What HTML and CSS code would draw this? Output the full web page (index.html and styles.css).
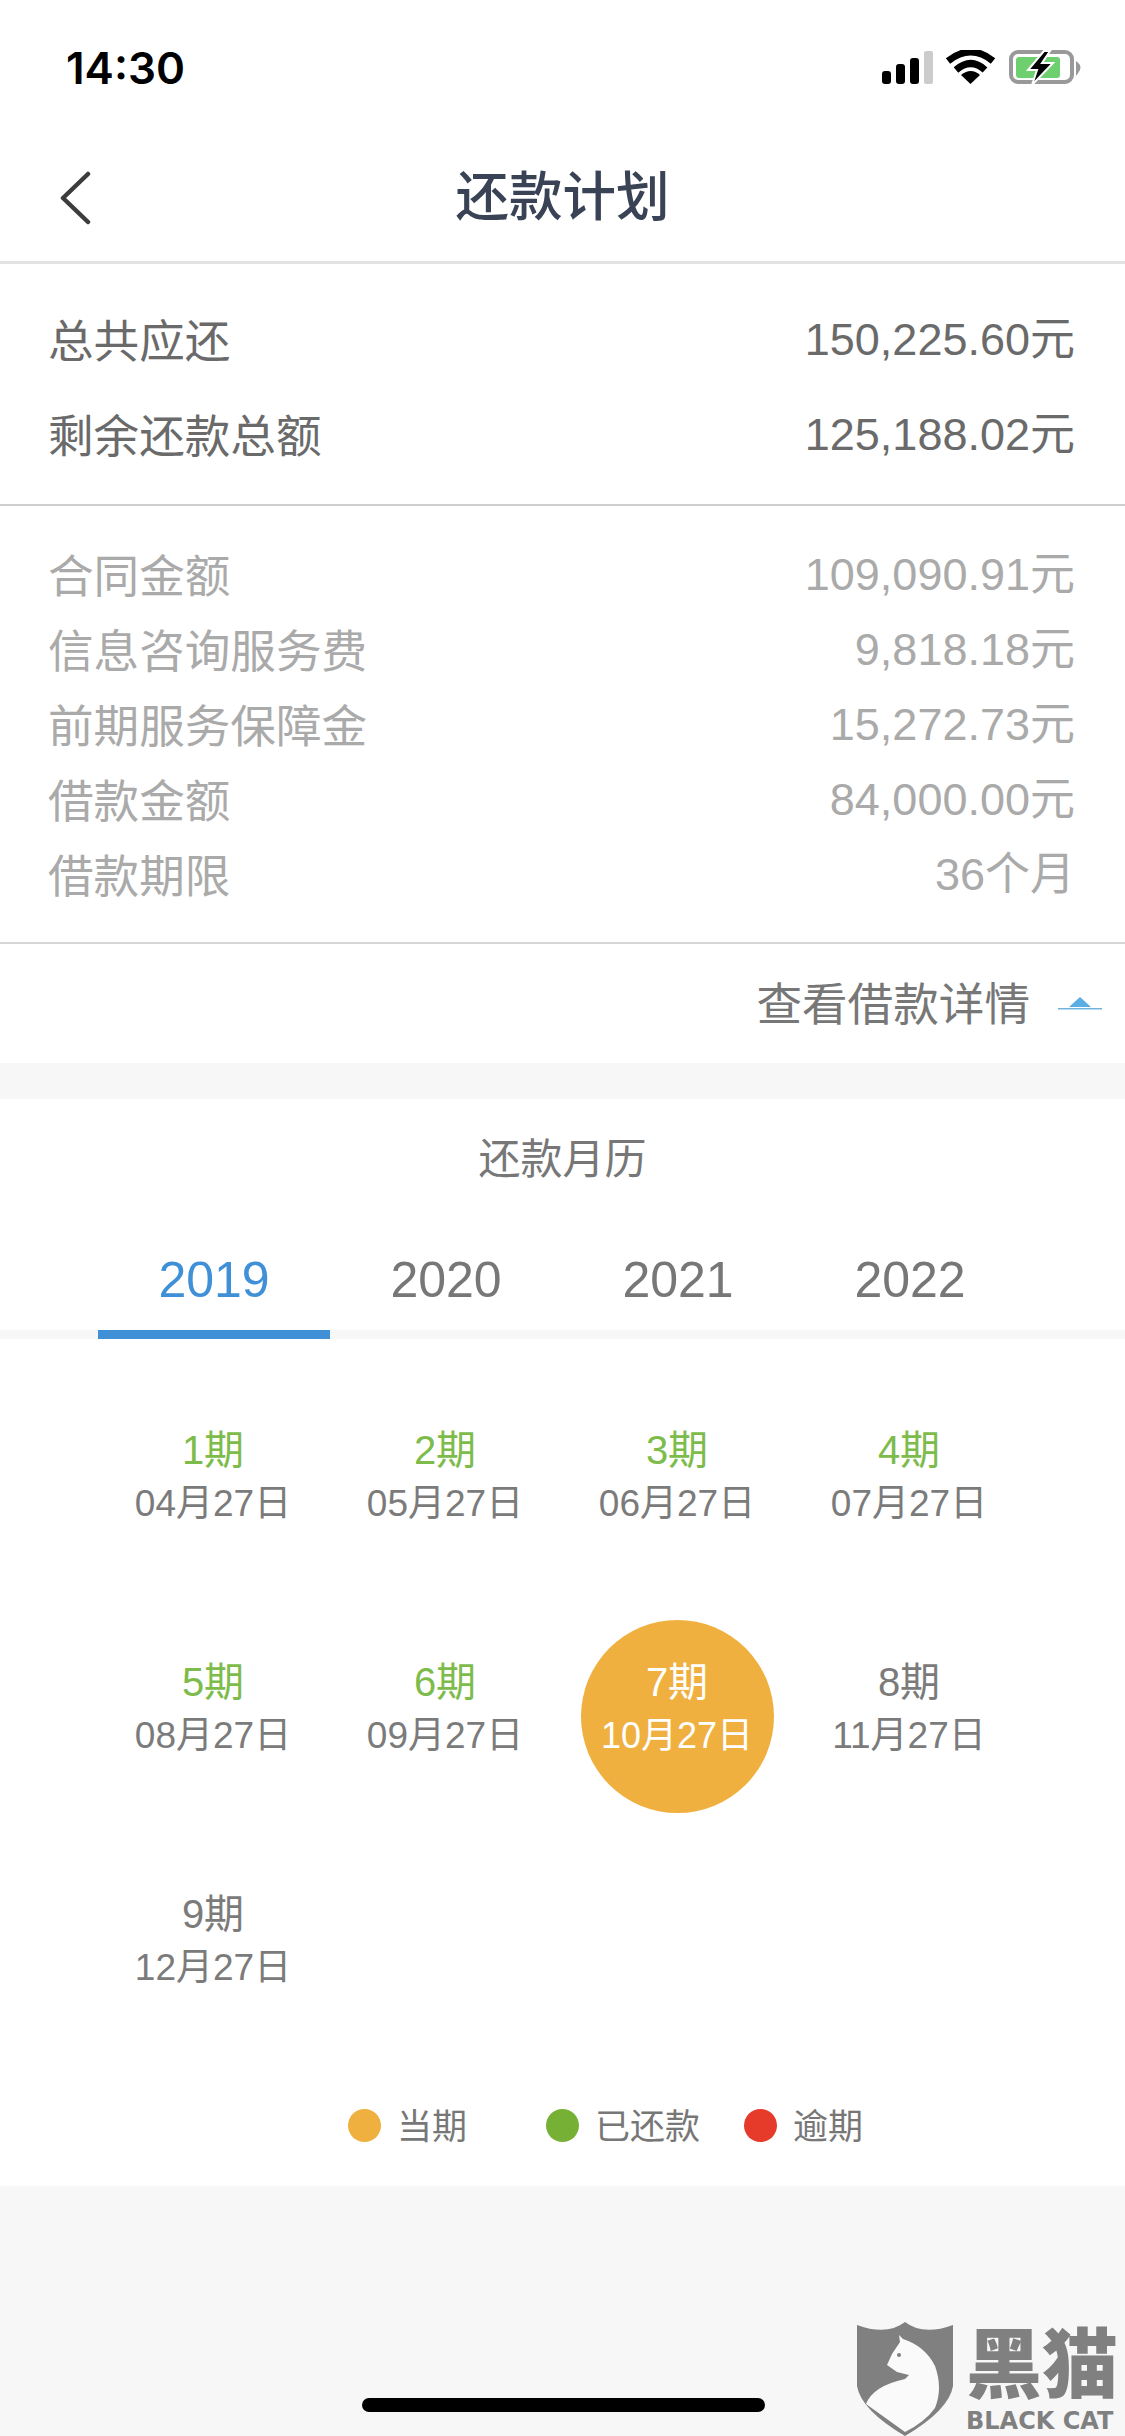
FILE: index.html
```html
<!DOCTYPE html>
<html lang="zh-CN">

<head>
    <meta charset="UTF-8">
    <title>还款计划</title>
    <link rel="stylesheet" href="styles.css">
</head>

<body>
    <div class="page">
        <div class="status">
            <span class="time">14:30</span>
            <svg class="status_icons" width="200" height="36" viewBox="0 0 200 36">
                <rect x="0" y="21" width="9" height="13" rx="3" fill="#000"/>
                <rect x="14" y="14" width="9" height="20" rx="3" fill="#000"/>
                <rect x="28" y="8" width="9" height="26" rx="3" fill="#000"/>
                <rect x="42" y="1" width="9" height="33" rx="2" fill="#ccc"/>
                <path d="M66 11 Q89 -7 111 11" fill="none" stroke="#000" stroke-width="7"/>
                <path d="M74 20 Q89 7 103 20" fill="none" stroke="#000" stroke-width="7"/>
                <path d="M79 25 Q89 17 98 25 L88.500 34z" fill="#000"/>
                <rect x="129" y="2" width="61" height="30" rx="7" fill="none" stroke="#999" stroke-width="4"/>
                <rect x="134" y="7" width="44" height="21" rx="3" fill="#6ecf6e"/>
                <path d="M195 13 Q200 17 195 23z" fill="#999" stroke="#999" stroke-width="2"/>
                <path d="M162 1 L146 20 L155 20 L150 35 L171 13 L160 13 L168 1z" fill="#000" stroke="#fff" stroke-width="2"/>
            </svg>
        </div>
        <div class="nav">
            <svg class="back" width="32" height="54" viewBox="0 0 32 54">
                <path d="M29 3 L4 27 L29 51" fill="none" stroke="#3c3c3c" stroke-width="4.500" stroke-linecap="round" stroke-linejoin="round"/>
            </svg>
            <h1 class="nav_title">还款计划</h1>
        </div>

        <div class="summary">
            <p class="row"><span>总共应还</span><span>150,225.60元</span></p>
            <p class="row"><span>剩余还款总额</span><span>125,188.02元</span></p>
        </div>

        <div class="details">
            <p class="row"><span>合同金额</span><span>109,090.91元</span></p>
            <p class="row"><span>信息咨询服务费</span><span>9,818.18元</span></p>
            <p class="row"><span>前期服务保障金</span><span>15,272.73元</span></p>
            <p class="row"><span>借款金额</span><span>84,000.00元</span></p>
            <p class="row"><span>借款期限</span><span>36个月</span></p>
        </div>

        <div class="more">
            <span>查看借款详情</span>
            <svg width="44" height="16" viewBox="0 0 44 16">
                <path d="M22 1 L33 11 L11 11z" fill="#5aaee3"/>
                <rect x="0" y="12" width="44" height="1.500" fill="#6fb5e0"/>
            </svg>
        </div>

        <div class="calendar">
            <p class="cal_title">还款月历</p>
            <div class="tabs">
                <span class="tab tab_on">2019</span>
                <span class="tab">2020</span>
                <span class="tab">2021</span>
                <span class="tab">2022</span>
            </div>
            <div class="periods">
                <div class="cell"><div class="period paid"><b>1期</b><i>04月27日</i></div></div>
                <div class="cell"><div class="period paid"><b>2期</b><i>05月27日</i></div></div>
                <div class="cell"><div class="period paid"><b>3期</b><i>06月27日</i></div></div>
                <div class="cell"><div class="period paid"><b>4期</b><i>07月27日</i></div></div>
                <div class="cell"><div class="period paid"><b>5期</b><i>08月27日</i></div></div>
                <div class="cell"><div class="period paid"><b>6期</b><i>09月27日</i></div></div>
                <div class="cell"><div class="period current"><b>7期</b><i>10月27日</i></div></div>
                <div class="cell"><div class="period"><b>8期</b><i>11月27日</i></div></div>
                <div class="cell"><div class="period"><b>9期</b><i>12月27日</i></div></div>
            </div>
            <div class="legend">
                <span class="legend_item"><em class="dot dot_cur"></em>当期</span>
                <span class="legend_item"><em class="dot dot_paid"></em>已还款</span>
                <span class="legend_item"><em class="dot dot_late"></em>逾期</span>
            </div>
        </div>

        <div class="watermark">
            <svg width="96" height="114" viewBox="0 0 96 114">
                <path d="M0 3 Q30 14 48 0 Q66 14 96 3 L96 64 Q92 88 48 114 Q4 88 0 64z" fill="#808080"/>
                <path d="M42 13 L46 17 Q68 24 78 44 Q86 66 78 86 Q68 100 48 110 L9 82 Q16 64 48 57 L52 53 L40 50 L30 43 L35 32 L43 20z" fill="#fafafa"/>
                <circle cx="42" cy="33" r="2" fill="#808080"/>
            </svg>
            <div class="wm_text">
                <span class="wm_cn">黑猫</span>
                <span class="wm_en">BLACK CAT</span>
            </div>
        </div>
        <div class="home_bar"></div>
    </div>
</body>

</html>
```

FILE: styles.css
```css
* {
    margin: 0;
    padding: 0;
    box-sizing: border-box;
}

body {
    background: #f7f7f7;
    font-family: "Liberation Sans", "Noto Sans CJK SC", sans-serif;
}

.page {
    position: relative;
    width: 1125px;
    height: 2436px;
    overflow: hidden;
    background: #f7f7f7;
}

.status {
    display: flex;
    justify-content: space-between;
    align-items: center;
    height: 136px;
    padding: 0 43px 0 66px;
    background: #fff;
}

.time {
    font-family: "Inter", sans-serif;
    font-size: 44px;
    font-weight: 600;
    color: #000;
}

.nav {
    position: relative;
    height: 128px;
    display: flex;
    justify-content: center;
    align-items: flex-start;
    background: #fff;
    border-bottom: 3px solid #e2e2e2;
}

.back {
    position: absolute;
    left: 59px;
    top: 35px;
}

.nav_title {
    font-size: 53.500px;
    font-weight: 500;
    line-height: 70px;
    margin-top: 27px;
    color: #3a4256;
}

.row {
    display: flex;
    justify-content: space-between;
    padding: 0 50px 0 48px;
    font-size: 45px;
}

.row span:first-child {
    font-size: 45.600px;
    padding-top: 2px;
}

.row span:last-child {
    margin-top: -1px;
}

.summary {
    padding: 29px 0 21px;
    background: #fff;
    border-bottom: 2px solid #cfcfcf;
    color: #6a6a6a;
}

.summary .row {
    height: 95px;
    line-height: 95px;
}

.details {
    padding: 32px 0 29px;
    background: #fff;
    border-bottom: 2px solid #d6d6d6;
    color: #aaa;
}

.details .row {
    height: 75px;
    line-height: 75px;
}

.more {
    display: flex;
    justify-content: flex-end;
    align-items: center;
    gap: 28px;
    height: 119px;
    padding-right: 23px;
    background: #fff;
    font-size: 45.600px;
    color: #777;
}

.more span {
    padding-bottom: 5px;
}

.calendar {
    margin-top: 36px;
    background: #fff;
    height: 1087px;
}

.cal_title {
    height: 122px;
    line-height: 122px;
    text-align: center;
    font-size: 42px;
    color: #777;
}

.tabs {
    display: flex;
    height: 118px;
    padding: 0 98px;
    border-bottom: 9px solid #f7f7f7;
}

.tab {
    width: 232px;
    height: 118px;
    padding-top: 27px;
    line-height: 64px;
    text-align: center;
    font-size: 50px;
    color: #777;
}

.tab_on {
    color: #3f90d6;
    border-bottom: 9px solid #3f90d6;
}

.periods {
    display: grid;
    grid-template-columns: repeat(4, 232px);
    grid-auto-rows: 232px;
    height: 726px;
    padding: 29px 0 0 97px;
}

.cell {
    display: flex;
    justify-content: center;
    align-items: center;
}

.period {
    display: flex;
    flex-direction: column;
    align-items: center;
    justify-content: center;
    width: 193px;
    height: 193px;
    padding-bottom: 14px;
    border-radius: 50%;
    color: #7b7b7b;
}

.period b {
    font-size: 40px;
    font-weight: 400;
    line-height: 54px;
}

.period i {
    font-size: 37px;
    font-style: normal;
    line-height: 54px;
    white-space: nowrap;
}

.period.paid b {
    color: #7dbb4b;
}

.period.current {
    background: #f0b03f;
    color: #fff;
}

.period.current i {
    font-size: 36px;
}

.legend {
    display: flex;
    align-items: center;
    height: 121px;
    padding: 0 0 5px 348px;
}

.legend_item {
    display: flex;
    align-items: center;
    gap: 16px;
    width: 198px;
    font-size: 35px;
    color: #777;
    white-space: nowrap;
}

.dot {
    width: 33px;
    height: 33px;
    margin-top: 5px;
    border-radius: 50%;
}

.dot_cur {
    background: #f0b03f;
}

.dot_paid {
    background: #76b035;
}

.dot_late {
    background: #e63a2b;
}

.watermark {
    position: absolute;
    left: 857px;
    top: 2322px;
    display: flex;
    gap: 13px;
    color: #808080;
}

.wm_text {
    display: flex;
    flex-direction: column;
    width: 156px;
}

.wm_cn {
    font-size: 76px;
    font-weight: 900;
    line-height: 87px;
    white-space: nowrap;
}

.wm_en {
    font-family: "DejaVu Sans", sans-serif;
    font-size: 24px;
    font-weight: 700;
    line-height: 24px;
    white-space: nowrap;
}

.home_bar {
    position: absolute;
    left: 362px;
    top: 2398px;
    width: 403px;
    height: 14px;
    border-radius: 7px;
    background: #000;
}
```
